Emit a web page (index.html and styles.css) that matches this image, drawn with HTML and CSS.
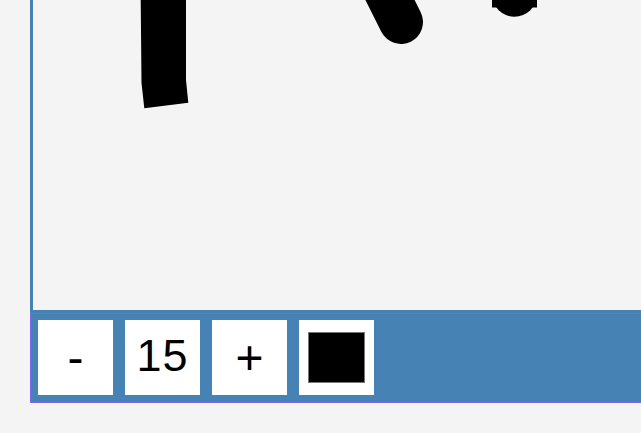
FILE: index.html
```html
<!DOCTYPE html>
<html lang="en">
<head>
<meta charset="utf-8">
<title>Paint</title>
<link rel="stylesheet" href="styles.css">
</head>
<body>
<div class="app">
  <div class="canvas">
    <svg class="drawing" width="800" height="310" viewBox="33 0 800 310">
      <polygon points="140.7,0 141.5,83 144.3,108.3 188.3,102.7 186,80 186,0" fill="#000"/>
      <line x1="370" y1="-40" x2="401" y2="22" stroke="#000" stroke-width="44" stroke-linecap="round"/>
      <rect x="492" y="-20" width="45" height="27.5" fill="#000"/>
      <circle cx="514.5" cy="-5.5" r="22.3" fill="#000"/>
    </svg>
  </div>
  <div class="toolbar">
    <button class="tool">-</button>
    <div class="tool size">15</div>
    <button class="tool">+</button>
    <button class="tool color"><span class="swatch"></span></button>
  </div>
</div>
</body>
</html>
```
FILE: styles.css
```css
html, body {
  margin: 0;
  padding: 0;
  overflow: hidden;
  background: #f4f4f4;
  font-family: "Liberation Sans", Arial, sans-serif;
}
.app {
  margin-left: 30px;
  width: 800px;
}
.canvas {
  border: 3px solid steelblue;
  border-top: 0;
  height: 310px;
  background: #f4f4f4;
  overflow: hidden;
}
.drawing {
  display: block;
}
.toolbar {
  display: flex;
  gap: 12px;
  padding: 6px 7px 7px;
  background: steelblue;
  border: 1px solid #7b68ee;
}
.tool {
  width: 75px;
  height: 75px;
  border: 0;
  margin: 0;
  padding: 0;
  background: #fff;
  color: #000;
  font-family: "Liberation Sans", Arial, sans-serif;
  font-size: 48px;
  line-height: 1;
  display: flex;
  align-items: center;
  justify-content: center;
  box-sizing: border-box;
}
.size {
  font-size: 45px;
  letter-spacing: 1px;
  padding-bottom: 4px;
}
.color {
  padding: 12px 9px;
  align-items: stretch;
  justify-content: stretch;
}
.swatch {
  flex: 1;
  background: #000;
  border: 1px solid #777;
}
```
